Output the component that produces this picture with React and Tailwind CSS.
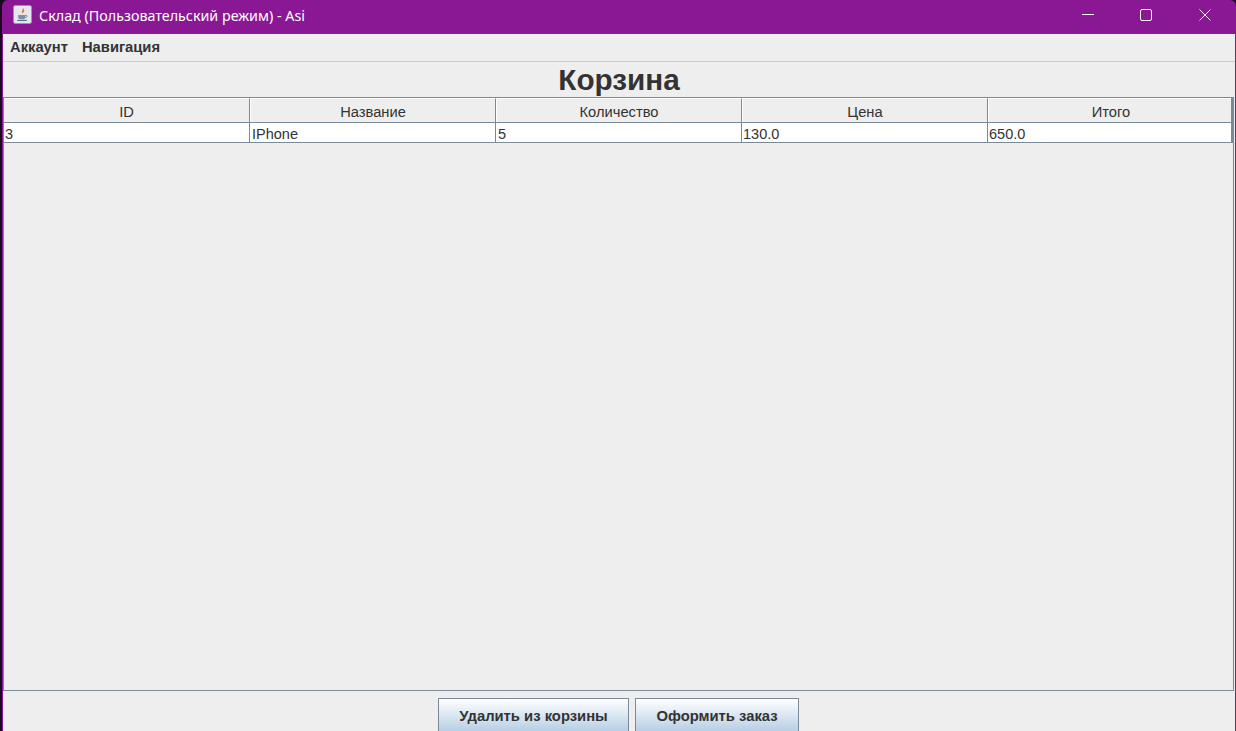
import React from "react";

const columns = ["ID", "Название", "Количество", "Цена", "Итого"];
const row = ["3", "IPhone", "5", "130.0", "650.0"];

function JavaIcon() {
  return (
    <svg width="19" height="19" viewBox="0 0 20 20" className="shrink-0 -mt-[5px]">
      <rect x="0.5" y="0.5" width="19" height="19" rx="2" fill="#e4e8ee" stroke="#8b9bb0" />
      <path d="M10 3c1.5 2-1.5 3-.5 5 .3.7 1 1.2 1 1.2-.4-1.5 2.3-2.500 1.200-4.400C11.200 4 10.500 3.500 10 3z" fill="#e8761a" />
      <path d="M5.500 10.500h7.500v2.500c0 1.500-1 2-2 2H7.500c-1 0-2-.5-2-2z" fill="#7d8fa8" />
      <path d="M13 11h1.200c1 0 1 2-1.200 2.200" fill="none" stroke="#5f7391" strokeWidth="0.9" />
      <path d="M4.500 16.200h10" stroke="#4f6585" strokeWidth="1.100" />
    </svg>
  );
}

function WindowButtons() {
  return (
    <div className="flex items-center pr-px">
      <div className="w-[58px] h-[34px] flex items-center justify-center -mt-[4px]">
        <svg width="12" height="12" viewBox="0 0 12 12">
          <path d="M0 5.500h12" stroke="#fff" strokeWidth="1" />
        </svg>
      </div>
      <div className="w-[58px] h-[34px] flex items-center justify-center -mt-[4px]">
        <svg width="12" height="12" viewBox="0 0 12 12">
          <rect x="0.500" y="0.500" width="11" height="11" rx="1.500" fill="none" stroke="#fff" strokeWidth="1" />
        </svg>
      </div>
      <div className="w-[60px] h-[34px] flex items-center justify-center -mt-[4px]">
        <svg width="12" height="12" viewBox="0 0 12 12">
          <path d="M0.500 0.500l11 11M11.500 0.500l-11 11" stroke="#fff" strokeWidth="1" />
        </svg>
      </div>
    </div>
  );
}

function ActionButton({ width, children }) {
  return (
    <button className="h-[33px] pt-[2px] border border-[#7a8a99] border-b-0 bg-gradient-to-b from-[#ffffff] to-[#b8cfe5] text-[14.8px] font-bold text-[#333333]" style={{ width }}>
      {children}
    </button>
  );
}

export default function App() {
  return (
    <div className="w-[1236px] h-[731px] overflow-hidden bg-[#1c0a20]">
      <div className="h-full ml-[2px] rounded-t-[6px] flex flex-col bg-[#8a1794] font-['Liberation_Sans',Arial,sans-serif]">
        {/* title bar */}
        <div className="h-[34px] shrink-0 flex items-center justify-between pl-[11px]">
          <div className="flex items-center gap-[7px]">
            <JavaIcon />
            <span className="-mt-[2px] text-[14.3px] text-white font-['Noto_Sans','Liberation_Sans',sans-serif] leading-none">Склад (Пользовательский режим) - Asi</span>
          </div>
          <WindowButtons />
        </div>

        <div className="flex-1 min-h-0 flex ml-px mr-px bg-[#eeeeee] flex-col text-[#333333]">
          {/* menu */}
          <div className="h-[28px] shrink-0 flex items-center gap-[14px] px-[7px] border-b border-[#cccccc] text-[14.75px] font-bold">
            <span>Аккаунт</span>
            <span>Навигация</span>
          </div>

          <h1 className="h-[35px] shrink-0 flex items-center justify-center text-[29.7px] font-bold leading-none pt-px">Корзина</h1>

          {/* table */}
          <div className="flex-1 min-h-0 mr-px border border-[#7a8a99]">
            <div className="grid grid-cols-[246px_246px_246px_246px_1fr] h-[25px] border-b border-[#7a8a99] border-r-2 border-r-[#7a8a99]">
              {columns.map((name, i) => (
                <div key={name} className={`flex items-center justify-center text-[14.7px] leading-none border-t border-white pt-[3px] ${i < 4 ? "border-r border-r-[#7a8a99]" : "pl-[2px]"} ${i > 0 ? "border-l border-l-white" : ""}`}>
                  {name}
                </div>
              ))}
            </div>
            <div className="grid grid-cols-[246px_246px_246px_246px_1fr] h-[20px] bg-white border-b border-[#7a8a99] border-r-2 border-r-[#7a8a99]">
              {row.map((val, i) => (
                <div key={i} className={`flex items-center text-[14.5px] leading-none pt-[3px] ${i === 1 || i === 2 ? "pl-[2px]" : "pl-px"} ${i < 4 ? "border-r border-[#7a8a99]" : ""}`}>
                  {val}
                </div>
              ))}
            </div>
          </div>

          {/* buttons */}
          <div className="h-[40px] shrink-0 pr-px flex items-end justify-center gap-[6px]">
            <ActionButton width={191}>Удалить из корзины</ActionButton>
            <ActionButton width={164}>Оформить заказ</ActionButton>
          </div>
        </div>
      </div>
    </div>
  );
}
